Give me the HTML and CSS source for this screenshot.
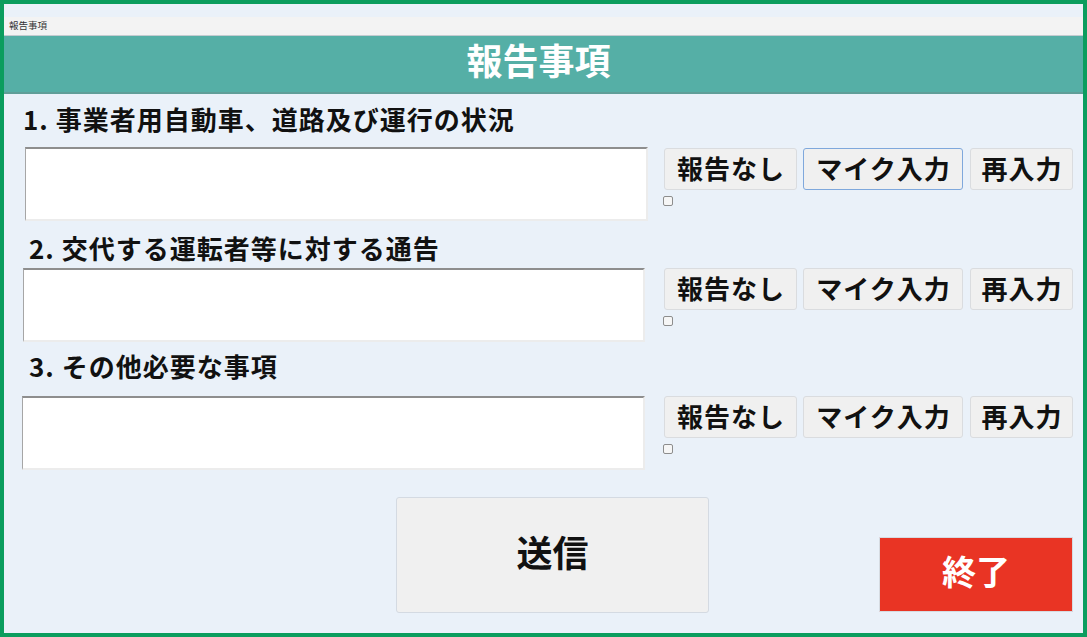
FILE: index.html
```html
<!DOCTYPE html>
<html lang="ja">
<head>
<meta charset="utf-8">
<title>報告事項</title>
<link rel="stylesheet" href="styles.css">
</head>
<body>
<div class="window">
  <div class="topband"></div>
  <div class="titlebar"><span class="titlebar-text">報告事項</span></div>
  <header class="header"><h1 class="header-title">報告事項</h1></header>
  <main class="content">
    <section class="item item-1">
      <h2 class="item-label">1. 事業者用自動車、道路及び運行の状況</h2>
      <div class="item-row">
        <textarea class="item-text"></textarea>
        <div class="actions">
          <div class="btns">
            <button class="btn btn-none">報告なし</button>
            <button class="btn btn-mic is-focused">マイク入力</button>
            <button class="btn btn-redo">再入力</button>
          </div>
          <input type="checkbox" class="check">
        </div>
      </div>
    </section>
    <section class="item item-2">
      <h2 class="item-label">2. 交代する運転者等に対する通告</h2>
      <div class="item-row">
        <textarea class="item-text"></textarea>
        <div class="actions">
          <div class="btns">
            <button class="btn btn-none">報告なし</button>
            <button class="btn btn-mic">マイク入力</button>
            <button class="btn btn-redo">再入力</button>
          </div>
          <input type="checkbox" class="check">
        </div>
      </div>
    </section>
    <section class="item item-3">
      <h2 class="item-label">3. その他必要な事項</h2>
      <div class="item-row">
        <textarea class="item-text"></textarea>
        <div class="actions">
          <div class="btns">
            <button class="btn btn-none">報告なし</button>
            <button class="btn btn-mic">マイク入力</button>
            <button class="btn btn-redo">再入力</button>
          </div>
          <input type="checkbox" class="check">
        </div>
      </div>
    </section>
    <div class="footer">
      <button class="send">送信</button>
      <button class="end">終了</button>
    </div>
  </main>
</div>
</body>
</html>
```
FILE: styles.css
```css
* { box-sizing: border-box; }
html, body { margin: 0; padding: 0; }
body {
  width: 1087px;
  height: 637px;
  overflow: hidden;
  font-family: "Noto Sans CJK JP", "Noto Sans", sans-serif;
  color: #111;
}
.window {
  width: 1087px;
  height: 637px;
  border: 4px solid #0b9d5e;
  background: #eaf1f9;
  display: flex;
  flex-direction: column;
}
.topband { height: 13px; background: #eaf1f9; }
.titlebar {
  height: 19px;
  background: #f3f3f3;
  border-bottom: 1px solid #c3cbd0;
  padding: 2px 0 0 5px;
}
.titlebar-text {
  display: block;
  font-size: 9.5px;
  line-height: 12px;
  color: #333;
}
.header {
  height: 58px;
  background: #55afa6;
  border-bottom: 2px solid #5f9e98;
  display: flex;
  align-items: center;
  justify-content: center;
  padding-right: 10px;
}
.header-title {
  margin: -10px 0 0 0;
  font-size: 36px;
  line-height: 40px;
  font-weight: 700;
  color: #fff;
}
.content {
  flex: 1;
  display: flex;
  flex-direction: column;
  padding-right: 10px;
}
.item-label {
  margin: 0;
  font-size: 26px;
  line-height: 30px;
  letter-spacing: 1px;
  font-weight: 700;
  color: #111;
}
.item-1 { padding-top: 10px; }
.item-1 .item-label { padding-left: 19px; margin-bottom: 13px; }
.item-2 { margin-top: 12px; }
.item-2 .item-label { padding-left: 25px; margin-bottom: 5px; }
.item-3 { margin-top: 9px; }
.item-3 .item-label { padding-left: 25px; margin-bottom: 15px; }

.item-row {
  display: grid;
  grid-template-columns: 1fr 409px;
  column-gap: 16px;
  align-items: start;
}
.item-1 .item-row { padding-left: 21px; }
.item-2 .item-row { padding-left: 19px; }
.item-2 .item-text, .item-3 .item-text { margin-right: 3px; }
.item-3 .item-row { padding-left: 18px; }

.item-text {
  display: block;
  width: auto;
  height: 74px;
  resize: none;
  background: #fff;
  border-style: solid;
  border-width: 2px 2px 2px 1px;
  border-color: #8e8e8e #ececec #ececec #a6a6a6;
  border-radius: 0;
  margin: 0;
  padding: 2px;
  font-family: inherit;
}
.item-1 .actions { padding-top: 1px; }
.btns {
  display: flex;
  gap: 6px;
}
.btn {
  height: 42px;
  margin: 0;
  padding: 0 0 3px 1px;
  background: #f0f0f0;
  border: 1px solid #dadcdf;
  border-radius: 3px;
  font-family: inherit;
  font-size: 26px;
  font-weight: 700;
  letter-spacing: 1px;
  color: #111;
  line-height: 1;
}
.btn-none { width: 133px; }
.btn-mic { width: 160px; }
.btn-redo { width: 103px; margin-left: 1px; }
.btn.is-focused { border-color: #7fa8dc; }

.check {
  appearance: none;
  -webkit-appearance: none;
  display: block;
  width: 10px;
  height: 10px;
  margin: 6px 0 0 -1px;
  border: 1px solid #8d8d8d;
  border-radius: 2px;
  background: #f6f6f6;
}

.footer {
  display: flex;
  align-items: flex-end;
  margin-top: 27px;
  padding-left: 392px;
}
.send {
  width: 313px;
  height: 116px;
  margin: 0;
  padding: 0 0 8px;
  background: #f0f0f0;
  border: 1px solid #d4dae2;
  border-radius: 3px;
  font-family: inherit;
  font-size: 36px;
  font-weight: 700;
  color: #111;
}
.end {
  width: 194px;
  height: 75px;
  margin: 0 0 1px auto;
  padding: 0 0 8px;
  background: #e93424;
  border: 1px solid #d6dbe1;
  border-radius: 1px;
  font-family: inherit;
  font-size: 34px;
  font-weight: 700;
  color: #fff;
}
```
